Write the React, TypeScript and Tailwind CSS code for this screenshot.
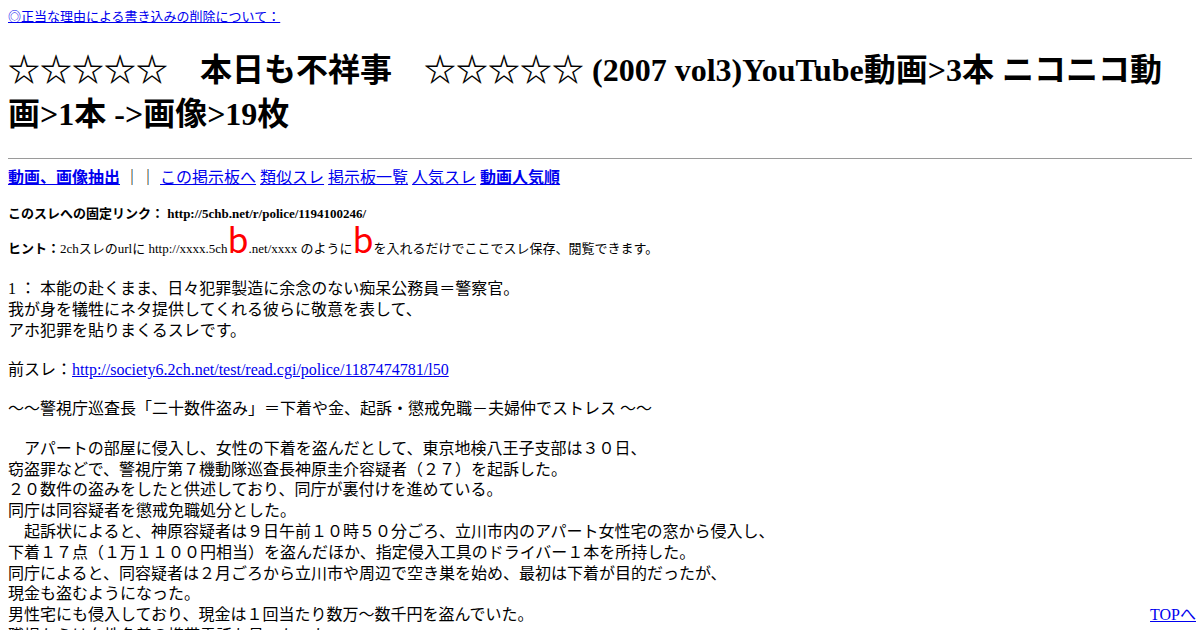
import React from "react";

const L = "text-[#0000ee] underline";

function Line({ children }: { children: React.ReactNode }) {
  return <div className="leading-[20.8px] whitespace-pre">{children}</div>;
}
function Blank() {
  return <div className="h-[18.6px]" />;
}

export default function App() {
  return (
    <div className="bg-white text-black px-2 font-['Liberation_Serif','Noto_Sans_CJK_JP',serif] min-h-[630px] overflow-hidden">
      <div className="pt-[9px] text-[13px] leading-[16px]">
        <a href="#" className={L}>◎正当な理由による書き込みの削除について：</a>
      </div>
      <h1 className="mt-[23px] text-[32px] font-bold leading-[44px]">
        ☆☆☆☆☆　本日も不祥事　☆☆☆☆☆ (2007 vol3)YouTube動画&gt;3本 ニコニコ動画&gt;1本 -&gt;画像&gt;19枚
      </h1>
      <div className="mt-[22px] border-t border-[#9a9a9a]" />
      <div className="mt-[9px] text-[16px] leading-[20px]">
        <a href="#" className={L + " font-bold"}>動画、画像抽出</a>
        {" ｜｜ "}
        <a href="#" className={L}>この掲示板へ</a>{" "}
        <a href="#" className={L}>類似スレ</a>{" "}
        <a href="#" className={L}>掲示板一覧</a>{" "}
        <a href="#" className={L}>人気スレ</a>{" "}
        <a href="#" className={L + " font-bold"}>動画人気順</a>
      </div>
      <div className="mt-[18px] text-[13px] leading-[16px] font-bold">
        このスレへの固定リンク： http://5chb.net/r/police/1194100246/
      </div>
      <div className="mt-0 text-[13px] leading-[34px]">
        <b>ヒント：</b>2chスレのurlに http://xxxx.5ch
        <span className="text-[#ff0000] text-[34px] leading-[34px] font-['Noto_Sans_CJK_JP',sans-serif]">b</span>
        .net/xxxx のように
        <span className="text-[#ff0000] text-[34px] leading-[34px] font-['Noto_Sans_CJK_JP',sans-serif]">b</span>
        を入れるだけでここでスレ保存、閲覧できます。
      </div>
      <div className="mt-[13px] text-[16px]">
        <Line>1 ： 本能の赴くまま、日々犯罪製造に余念のない痴呆公務員＝警察官。</Line>
        <Line>我が身を犠牲にネタ提供してくれる彼らに敬意を表して、</Line>
        <Line>アホ犯罪を貼りまくるスレです。</Line>
        <Blank />
        <Line>
          前スレ：<a href="#" className={L}>http://society6.2ch.net/test/read.cgi/police/1187474781/l50</a>
        </Line>
        <Blank />
        <Line>～～警視庁巡査長「二十数件盗み」＝下着や金、起訴・懲戒免職－夫婦仲でストレス ～～</Line>
        <Blank />
        <Line>　アパートの部屋に侵入し、女性の下着を盗んだとして、東京地検八王子支部は３０日、</Line>
        <Line>窃盗罪などで、警視庁第７機動隊巡査長神原圭介容疑者（２７）を起訴した。</Line>
        <Line>２０数件の盗みをしたと供述しており、同庁が裏付けを進めている。</Line>
        <Line>同庁は同容疑者を懲戒免職処分とした。</Line>
        <Line>　起訴状によると、神原容疑者は９日午前１０時５０分ごろ、立川市内のアパート女性宅の窓から侵入し、</Line>
        <Line>下着１７点（１万１１００円相当）を盗んだほか、指定侵入工具のドライバー１本を所持した。</Line>
        <Line>同庁によると、同容疑者は２月ごろから立川市や周辺で空き巣を始め、最初は下着が目的だったが、</Line>
        <Line>現金も盗むようになった。</Line>
        <div className="flex justify-between leading-[20.8px]">
          <span className="whitespace-pre">男性宅にも侵入しており、現金は１回当たり数万～数千円を盗んでいた。</span>
          <a href="#" className={L + " mr-[-4px]"}>TOPへ</a>
        </div>
        <Line>職場からは女性名義の携帯電話も見つかった。</Line>
      </div>
    </div>
  );
}
